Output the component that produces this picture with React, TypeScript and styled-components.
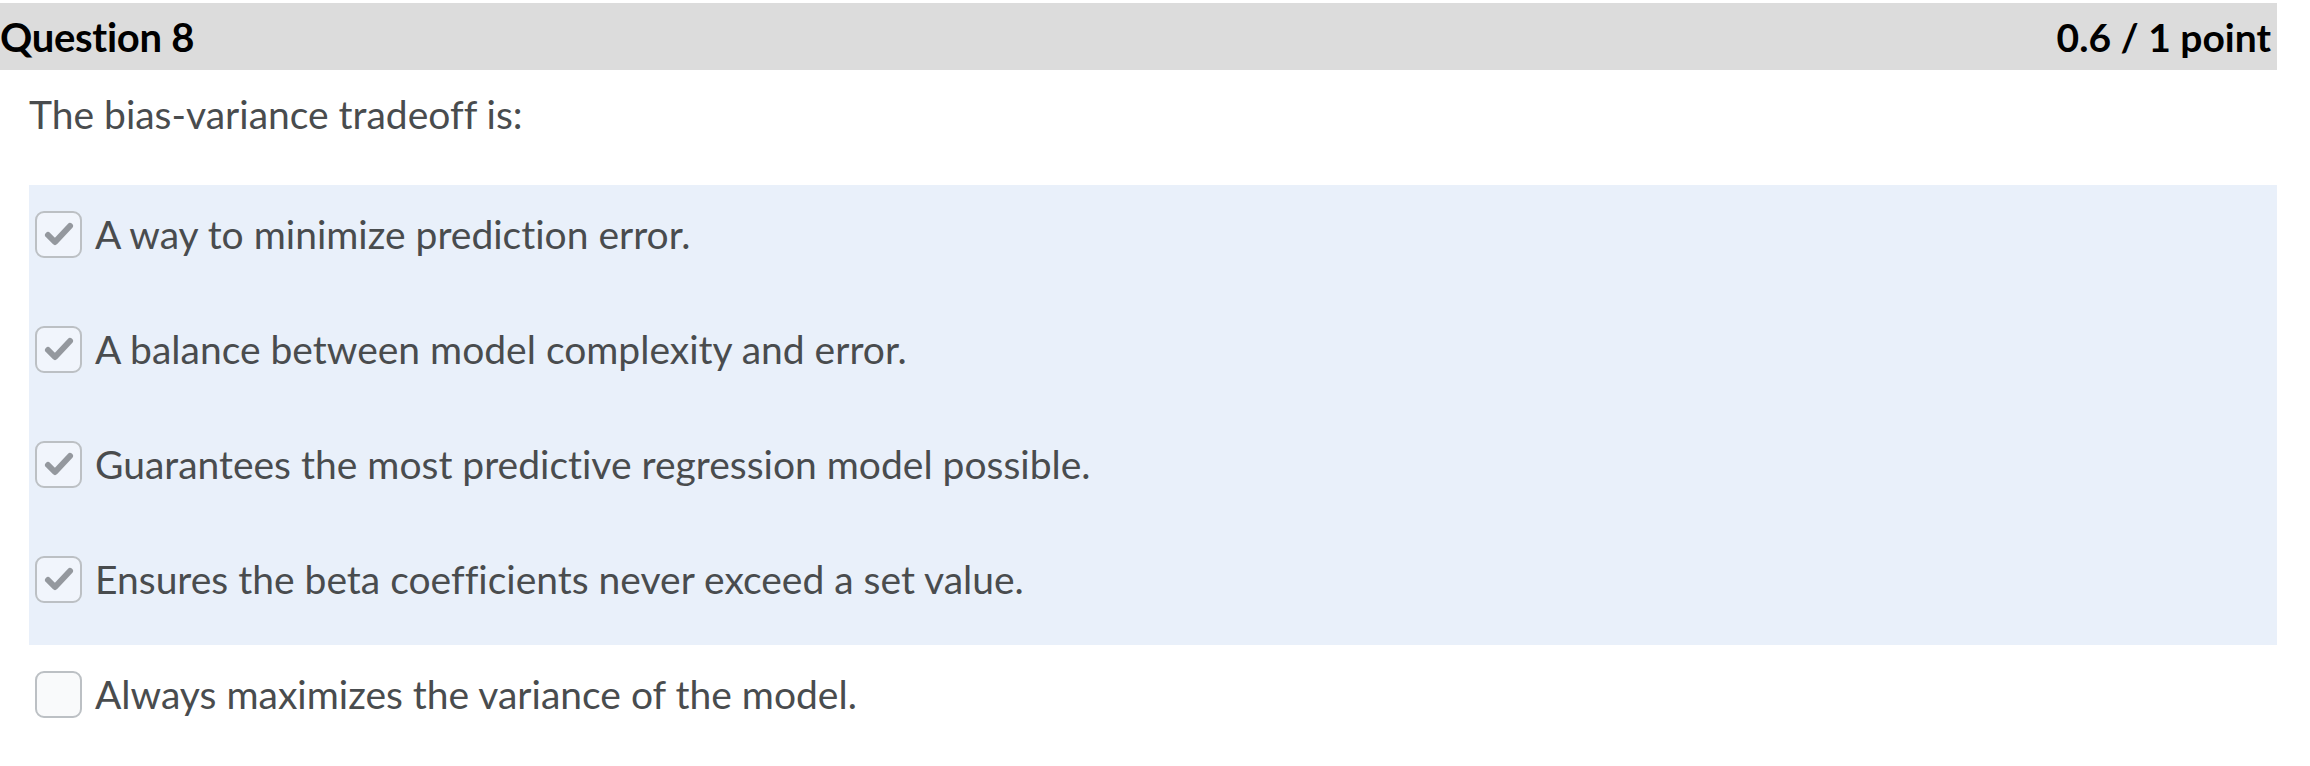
import React from "react";
import styled, { createGlobalStyle } from "styled-components";

const Global = createGlobalStyle`
  html, body { margin: 0; padding: 0; background: #ffffff; }
  body { font-family: Lato, "Open Sans", sans-serif; font-variant-ligatures: none; }
`;

const Page = styled.div`
  width: 2277px;
  padding-top: 3px;
`;

const Header = styled.div`
  height: 67px;
  background: #dcdcdc;
  display: flex;
  align-items: center;
  justify-content: space-between;
  padding: 0 6px 0 0;
  box-sizing: border-box;
`;

const Title = styled.h2`
  margin: 0;
  font-family: Lato, sans-serif;
  font-weight: 700;
  font-size: 40px;
  color: #000000;
  letter-spacing: -0.3px;
`;

const Score = styled.span`
  font-family: Lato, sans-serif;
  font-weight: 700;
  font-size: 39px;
  color: #000000;
`;

const Prompt = styled.p`
  margin: 0;
  padding: 21px 0 0 29px;
  height: 115px;
  box-sizing: border-box;
  font-family: Lato, sans-serif;
  font-size: 39px;
  color: #494c4e;
`;

const Options = styled.div`
  display: flex;
  flex-direction: column;
  margin-left: 29px;
`;

const Option = styled.label<{ $selected: boolean }>`
  display: flex;
  align-items: flex-start;
  gap: 13px;
  height: 115px;
  box-sizing: border-box;
  padding: 26px 0 0 6px;
  background: ${(p) => (p.$selected ? "#e9f0fa" : "transparent")};
`;

const Box = styled.span<{ $selected: boolean }>`
  flex: none;
  width: 47px;
  height: 47px;
  box-sizing: border-box;
  border: 2px solid #bcc0c4;
  border-radius: 9px;
  background: ${(p) => (p.$selected ? "#f1f5fc" : "#f9fafb")};
  display: flex;
  align-items: center;
  justify-content: center;
`;

const Text = styled.span`
  font-family: Lato, sans-serif;
  font-size: 39px;
  line-height: 47px;
  color: #494c4e;
`;

const Check = () => (
  <svg width="43" height="43" viewBox="0 0 43 43">
    <path
      d="M11 22 L18 29 L33 13"
      fill="none"
      stroke="#94989e"
      strokeWidth="6"
      strokeLinecap="round"
      strokeLinejoin="round"
    />
  </svg>
);

const options = [
  { text: "A way to minimize prediction error.", checked: true },
  { text: "A balance between model complexity and error.", checked: true },
  { text: "Guarantees the most predictive regression model possible.", checked: true },
  { text: "Ensures the beta coefficients never exceed a set value.", checked: true },
  { text: "Always maximizes the variance of the model.", checked: false },
];

export default function App() {
  return (
    <>
      <Global />
      <Page>
        <Header>
          <Title>Question 8</Title>
          <Score>0.6 / 1 point</Score>
        </Header>
        <Prompt>The bias-variance tradeoff is:</Prompt>
        <Options>
          {options.map((o) => (
            <Option key={o.text} $selected={o.checked}>
              <Box $selected={o.checked}>{o.checked && <Check />}</Box>
              <Text>{o.text}</Text>
            </Option>
          ))}
        </Options>
      </Page>
    </>
  );
}
